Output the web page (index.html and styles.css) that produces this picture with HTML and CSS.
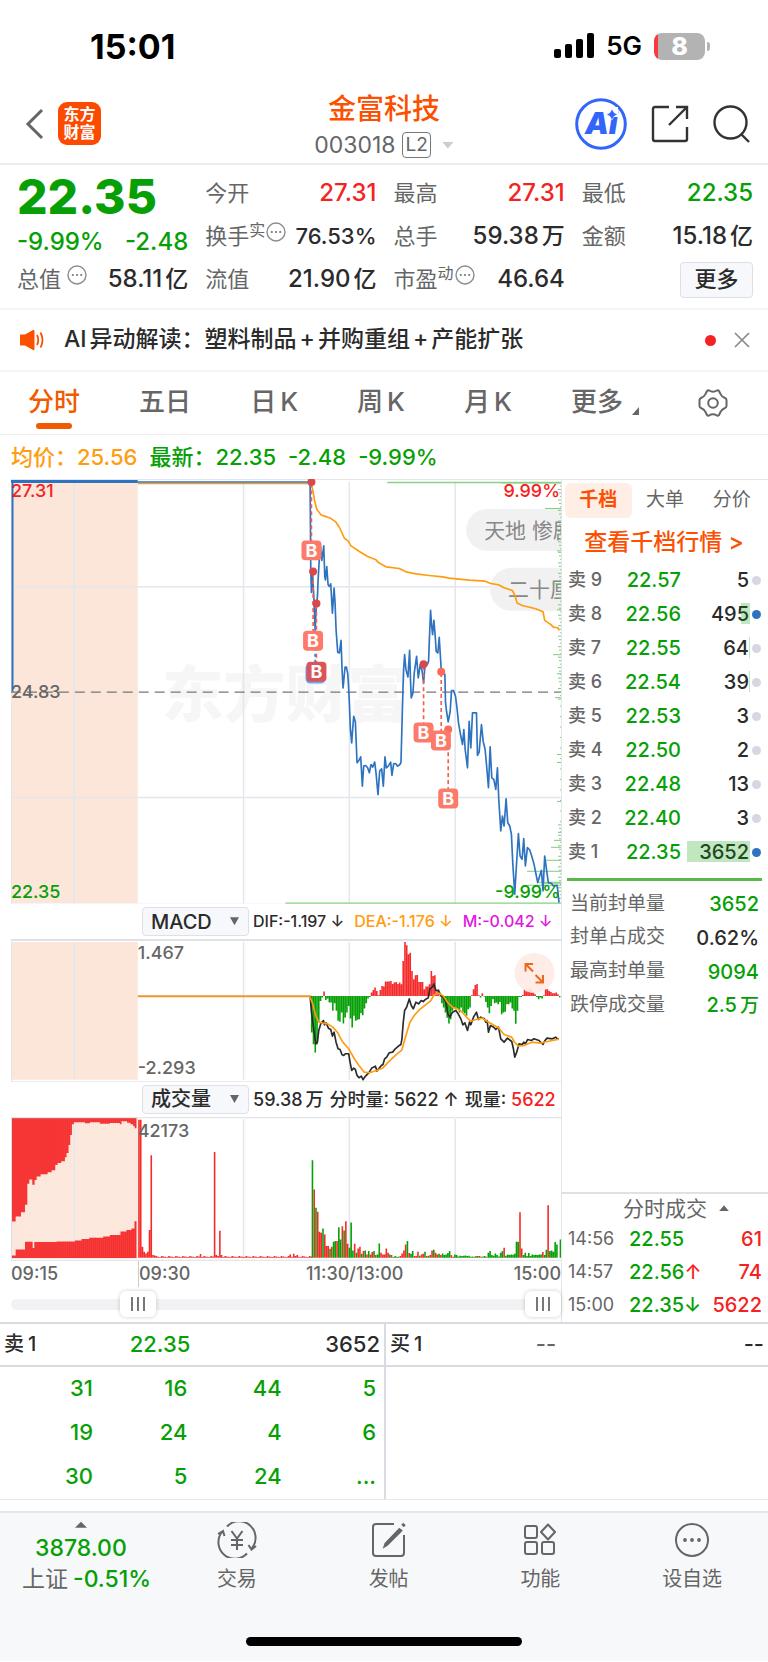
FILE: index.html
```html
<!DOCTYPE html>
<html lang="zh-CN">
<head>
<meta charset="utf-8">
<meta name="viewport" content="width=device-width, initial-scale=1">
<title>金富科技 003018</title>
<link rel="stylesheet" href="styles.css">
</head>
<body>
<svg class="defs" width="0" height="0" aria-hidden="true">
  <symbol id="info" viewBox="0 0 20 20"><circle cx="10" cy="10" r="9" fill="none" stroke="#8c8c8c" stroke-width="1.4"/><circle cx="5.8" cy="10" r="1.1" fill="#777"/><circle cx="10" cy="10" r="1.1" fill="#777"/><circle cx="14.2" cy="10" r="1.1" fill="#777"/></symbol>
</svg>

<div class="status">
  <span class="clock">15:01</span>
  <span class="signals">
    <svg width="40" height="26" viewBox="0 0 40 26" aria-hidden="true"><rect x="0" y="16" width="7" height="9" rx="2"/><rect x="11" y="11" width="7" height="14" rx="2"/><rect x="22" y="6" width="7" height="19" rx="2"/><rect x="33" y="0" width="7" height="25" rx="2"/></svg>
    <span class="net">5G</span>
    <span class="battery"><span class="cell">8</span><span class="tip"></span></span>
  </span>
</div>

<header class="top">
  <div class="side">
    <button class="icon" aria-label="返回"><svg width="20" height="32" viewBox="0 0 20 32" fill="none" stroke="#666" stroke-width="3"><path d="M17 2 L3 16 L17 30"/></svg></button>
    <a class="logo" href="#"><span>东方</span><span>财富</span></a>
  </div>
  <div class="stock">
    <h1>金富科技</h1>
    <div class="code"><span>003018</span><span class="lv">L2</span><i class="caret"></i></div>
  </div>
  <div class="side tools">
    <button class="icon" aria-label="Ai"><svg width="52" height="52" viewBox="0 0 52 52"><circle cx="26" cy="26" r="24.3" fill="none" stroke="#3465fb" stroke-width="3"/><text class="ai" x="10" y="36">Ai</text><rect x="31" y="9" width="12" height="9.5" fill="#fff"/><path d="M37 11 L39 14.6 L42.5 16.5 L39 18.4 L37 22 L35 18.4 L31.5 16.5 L35 14.6Z" fill="#3465fb" stroke="#fff" stroke-width=".6"/></svg></button>
    <button class="icon" aria-label="分享"><svg width="38" height="38" viewBox="0 0 38 38" fill="none" stroke="#333" stroke-width="2.4"><path d="M18 2H4Q2 2 2 4V34Q2 36 4 36H34Q36 36 36 34V22M25 2H36V14M36 2L18 20"/></svg></button>
    <button class="icon" aria-label="搜索"><svg width="38" height="38" viewBox="0 0 38 38" fill="none" stroke="#333" stroke-width="2.4"><circle cx="17.500" cy="17.500" r="16"/><path d="M28 29L36 37"/></svg></button>
  </div>
</header>

<section class="quote">
  <div class="last">22.35</div>
  <div class="kv"><span>今开</span><b class="red">27.31</b></div>
  <div class="kv"><span>最高</span><b class="red">27.31</b></div>
  <div class="kv"><span>最低</span><b class="green">22.35</b></div>
  <div class="kv chg"><b class="green">-9.99%</b><b class="green">-2.48</b></div>
  <div class="kv tight"><span>换手<sup>实</sup><svg class="inf"><use href="#info"/></svg></span><b>76.53%</b></div>
  <div class="kv"><span>总手</span><b>59.38<em>万</em></b></div>
  <div class="kv"><span>金额</span><b>15.18<em>亿</em></b></div>
  <div class="kv"><span>总值<svg class="inf gapl"><use href="#info"/></svg></span><b>58.11<em>亿</em></b></div>
  <div class="kv"><span>流值</span><b>21.90<em>亿</em></b></div>
  <div class="kv"><span>市盈<sup>动</sup><svg class="inf"><use href="#info"/></svg></span><b>46.64</b></div>
  <div class="kv end"><button class="more">更多</button></div>
</section>

<section class="notice">
  <svg width="24" height="22" viewBox="0 0 24 22" aria-hidden="true"><path d="M0 6.500Q0 5.500 1 5.500H5L13 1Q14.500 .5 14.500 2V20Q14.500 21.500 13 21L5 16.500H1Q0 16.500 0 15.500Z" fill="#fc5000"/><path d="M17 6Q19.500 11 17 16M20.500 3.500Q24.500 11 20.500 18.500" fill="none" stroke="#fc5000" stroke-width="1.800"/></svg>
  <p>AI<em>异动解读：塑料制品</em><em>+</em><em>并购重组</em><em>+</em><em>产能扩张</em></p>
  <i class="dot"></i>
  <button class="icon" aria-label="关闭"><svg width="16" height="16" viewBox="0 0 16 16" stroke="#888" stroke-width="1.600"><path d="M1 1L15 15M15 1L1 15"/></svg></button>
</section>

<nav class="tabs">
  <a class="on" href="#">分时</a><a href="#">五日</a><a href="#">日<em>K</em></a><a href="#">周<em>K</em></a><a href="#">月<em>K</em></a><a class="tm" href="#">更多<i></i></a>
  <button class="icon" aria-label="设置"><svg width="30" height="28" viewBox="0 0 30 28" fill="none" stroke="#666" stroke-width="2" stroke-linejoin="round"><path d="M9 2Q10 1 11 1.500Q15 4 19 1.500Q20 1 21 2L22.500 5Q23.500 7.500 27 9Q28.500 9.600 28.500 11V17Q28.500 18.400 27 19Q23.500 20.500 22.500 23L21 26Q20 27 19 26.500Q15 24 11 26.500Q10 27 9 26L7.500 23Q6.500 20.500 3 19Q1.500 18.400 1.500 17V11Q1.500 9.600 3 9Q6.500 7.500 7.500 5Z"/><circle cx="15" cy="14" r="4.800"/></svg></button>
</nav>

<div class="legend"><span class="orange">均价：25.56</span><span class="green">最新：22.35</span><span class="green">-2.48</span><span class="green">-9.99%</span></div>

<main class="board">
  <div class="charts">
    <svg class="plot" viewBox="11 479 551 426" role="img" aria-label="分时走势">
      <rect x="11" y="480" width="127" height="424" fill="#fce6da"/>
      <text class="wm" x="162" y="717">东方财富</text>
      <path class="grid" d="M74.500 482V904M244 482V904M350 482V904M456 482V904M11 587H562M11 798H562"/>
      <path d="M11.500 480V905M11 479.500H562M11 905H562" stroke="#e3e5ea" fill="none"/>
      <rect x="467" y="509" width="120" height="42" rx="21" class="pill"/><rect x="491" y="568" width="100" height="43" rx="21" class="pill"/>
      <text class="cm" x="485" y="538">天地 惨剧</text><text class="cm" x="509" y="597">二十厘</text>
      <path d="M11 692.500H562" stroke="#777" stroke-width="1.300" stroke-dasharray="10 6"/>
      <path id="edge" stroke="#7ccc7c" stroke-width="1" fill="none"/>
      <path d="M286 904H562M388 482.500H562" stroke="#86d286" stroke-width="1.300"/>
      <path d="M138 483.500H312" stroke="#f59a23" stroke-width="1.500"/>
      <path d="M11 481.500H138" stroke="#2e73c0" stroke-width="3"/><path d="M12.500 482V692" stroke="#2e73c0" stroke-width="2"/><path d="M138 482H312" stroke="#2e73c0" stroke-width="1.500"/>
      <g transform="translate(290 470) scale(.33333)" fill="none" stroke-linejoin="round">
        <polyline stroke="#ff9c10" stroke-width="5" points="64,40 70,60 75,90 82,118 95,135 110,140 125,146 138,155 150,172 165,205 176,213 185,228 210,245 235,260 260,270 268,279 290,291 330,296 350,306 380,312 420,317 460,321 480,325 540,331 588,334 605,341 628,345 645,354 670,362 678,378 684,400 700,407 740,417 762,426 767,452 785,464 793,472 806,474 810,482"/>
        <polyline stroke="#2e73c0" stroke-width="5" points="60,36 62,50 64,300 66,368 69,310 71,340 74,400 77,480 80,420 84,380 86,330 90,260 92,218 97,272 103,228 106,320 108,330 112,290 116,345 120,350 124,342 129,430 134,355 137,400 140,480 145,548 150,550 155,512 158,600 161,655 167,592 171,592 175,612 177,640 180,700 183,780 187,820 189,790 193,740 198,757 203,880 209,872 214,862 219,950 223,890 229,888 235,895 240,910 245,885 250,893 256,878 260,910 266,976 271,905 277,898 282,950 287,862 291,895 297,890 304,878 308,918 313,883 319,882 325,890 331,886 335,880 338,770 341,660 343,600 346,555 350,600 356,622 361,542 364,640 366,685 371,670 375,610 382,560 387,625 393,585 398,600 403,640 408,580 414,585 418,575 420,520 424,422 427,465 430,495 434,452 438,500 441,545 446,550 450,503 453,550 456,600 462,605 467,615 469,700 472,725 477,757 483,725 487,663 493,663 499,680 504,720 508,760 514,795 520,825 524,780 528,840 535,895 540,755 545,835 550,730 562,730 565,858 570,848 577,765 582,815 588,840 593,895 598,955 603,832 608,925 614,930 620,960 625,895 629,990 635,1085 640,1040 645,1070 651,988 656,1060 662,1070 667,1095 671,1180 677,1275 682,1190 688,1093 693,1160 699,1170 704,1108 709,1190 715,1135 722,1142 728,1160 735,1185 741,1215 746,1240 752,1220 757,1203 762,1265 767,1160 773,1205 778,1240 787,1242 793,1250 804,1248 806,1260 810,1300"/>
        <path stroke="#f4604f" stroke-width="5" stroke-dasharray="12 9" d="M66 40V215M71 310V485M81 405V580M403 590V762M456 610V785M477 785V958"/>
        <path stroke="#3a80d8" stroke-width="5" stroke-dasharray="9 9" d="M77 480V580"/>
      </g>
      <g id="marks"></g>
      <text class="lab red" x="11" y="497">27.31</text><text class="lab gray" x="11" y="698">24.83</text><text class="lab green" x="11" y="899">22.35</text>
      <text class="lab red" x="561" y="497" text-anchor="end">9.99%</text><text class="lab green" x="561" y="899" text-anchor="end">-9.99%</text>
    </svg>

    <div class="bar">
      <label class="pick"><select aria-label="指标"><option>MACD</option></select></label>
      <span class="ind">DIF:-1.197 ↓</span><span class="ind orange">DEA:-1.176 ↓</span><span class="ind pink">M:-0.042 ↓</span>
    </div>
    <svg class="plot" viewBox="11 940 551 143" role="img" aria-label="MACD">
      <rect x="11" y="943" width="127" height="138" fill="#fce6da"/>
      <path class="grid" d="M74.500 943V1081M244 943V1081M350 943V1081M456 943V1081"/>
      <path d="M11 941H562" stroke="#dfe1e6" stroke-width="2"/><path d="M11 1083H562M11.500 941V1083" stroke="#e3e5ea"/>
      <path id="mr" stroke="#f52a2a" stroke-width="1.600"/><path id="mg" stroke="#06a006" stroke-width="1.600"/>
      <path d="M138 997.300H311" stroke="#f0942a" stroke-width="2"/>
      <g transform="translate(290 900) scale(.33333)" fill="none" stroke-linejoin="round">
        <polyline stroke="#2b2b2b" stroke-width="5" points="62,291 66,340 72,385 79,435 84,430 88,395 94,375 102,365 105,378 110,372 117,388 124,392 129,412 134,400 140,430 146,450 152,452 158,468 163,470 168,465 178,465 182,490 187,515 193,508 198,512 203,530 209,537 216,532 221,543 226,535 240,520 247,508 254,505 258,502 263,517 270,508 276,500 281,497 286,480 292,475 300,462 310,460 318,450 330,440 335,437 338,420 342,370 346,335 352,325 360,300 366,320 372,330 380,310 388,315 396,305 402,308 408,302 417,297 422,270 430,264 434,255 440,275 448,275 455,290 462,295 470,310 476,345 482,355 490,340 500,335 507,345 515,360 521,378 527,372 535,395 541,370 545,378 553,355 562,340 568,362 575,355 586,360 590,370 594,365 598,400 604,380 614,385 620,392 628,385 635,420 645,430 655,418 668,428 673,450 677,475 683,460 690,435 700,437 704,430 709,435 716,422 727,425 735,420 750,425 762,437 768,425 774,418 790,420 800,415 805,420 810,420"/>
        <polyline stroke="#ff9c10" stroke-width="5" points="60,291 70,315 78,348 88,370 100,373 115,375 130,385 145,402 160,430 178,450 195,480 210,502 224,520 240,522 262,515 280,508 300,487 320,468 338,453 350,410 362,370 375,350 390,333 410,317 425,305 434,288 450,283 462,291 475,310 490,325 505,330 520,340 535,358 545,367 560,362 580,358 595,368 612,378 628,387 645,407 668,415 676,430 688,442 705,440 728,430 755,433 775,428 810,421"/>
      </g>
      <circle cx="535.500" cy="974" r="20" fill="#fdebe3" fill-opacity=".9"/>
      <path d="M534 965H526.500V972.500M526.500 965L534 972.500M544 976V983.500H536.500M544 983.500L536.500 976" fill="none" stroke="#f0641e" stroke-width="2"/>
      <text class="lab gray" x="138" y="960">1.467</text><text class="lab gray" x="138" y="1075">-2.293</text>
    </svg>

    <div class="bar">
      <label class="pick"><select aria-label="副图"><option>成交量</option></select></label>
      <span class="vol">59.38<em>万</em></span><span class="vol">分时量: 5622 ↑</span><span class="vol">现量: <b class="red">5622</b></span>
    </div>
    <svg class="plot" viewBox="11 1118 551 144" role="img" aria-label="成交量">
      <rect x="11" y="1119" width="127" height="141" fill="#fce6da"/>
      <path class="grid" d="M74.500 1120V1260M244 1120V1260M350 1120V1260M456 1120V1260"/>
      <g transform="translate(0 900) scale(.33333)"><path fill="#f62626" d="M35 657V968H47V953H63V940H75V918H82V855H88V842H97V858H104V843H110V833H122V826H143V820H155V814H166V798H173V792H184V787H195V775H200V762H206V738H211V708H216V676H222V670H255V673H270V670H300V674H330V672H360V676H365V667H382V671H392V676H400V682H405V688H410V657ZM35 1078V1070H47V1052H75V1029H98V1048H103V1030H170V1028H225V1025H245V1021H268V1017H310V1013H330V1009H362V998H380V994H395V989H404V967H410V1078Z"/></g>
      <path id="ties" stroke="#fff" stroke-opacity=".22" stroke-width=".7"/>
      <path d="M11 1118.700H562M11 1261.500H562M11.500 1118V1261" stroke="#dcdee3"/>
      <path id="vr" stroke="#f52a2a" stroke-width="1.600"/><path id="vg" stroke="#06a006" stroke-width="1.600"/>
      <text class="lab gray" x="138" y="1138">42173</text>
    </svg>
    <div class="axis"><span>09:15</span><span class="t2">09:30</span><span class="t3">11:30/13:00</span><span class="t4">15:00</span></div>
    <div class="range"><input type="range" min="0" max="1000" value="212" aria-label="起始"><input type="range" min="0" max="1000" value="1000" aria-label="结束"></div>
  </div>

  <aside class="depth">
    <div class="dtabs"><button class="on">千档</button><button>大单</button><button>分价</button></div>
    <a class="all" href="#">查看千档行情 &gt;</a>
    <table class="book"><tbody>
      <tr><th>卖 9</th><td class="green">22.57</td><td>5</td><td><i></i></td></tr>
      <tr><th>卖 8</th><td class="green">22.56</td><td>495<s style="width:9px"></s></td><td><i class="bl"></i></td></tr>
      <tr><th>卖 7</th><td class="green">22.55</td><td>64<s style="width:1px"></s></td><td><i></i></td></tr>
      <tr><th>卖 6</th><td class="green">22.54</td><td>39<s style="width:1px"></s></td><td><i></i></td></tr>
      <tr><th>卖 5</th><td class="green">22.53</td><td>3</td><td><i></i></td></tr>
      <tr><th>卖 4</th><td class="green">22.50</td><td>2</td><td><i></i></td></tr>
      <tr><th>卖 3</th><td class="green">22.48</td><td>13</td><td><i></i></td></tr>
      <tr><th>卖 2</th><td class="green">22.40</td><td>3</td><td><i></i></td></tr>
      <tr><th>卖 1</th><td class="green">22.35</td><td>3652<s style="width:63px"></s></td><td><i class="bl"></i></td></tr>
    </tbody></table>
    <table class="stats"><tbody>
      <tr><th>当前封单量</th><td class="green">3652</td></tr>
      <tr><th>封单占成交</th><td>0.62%</td></tr>
      <tr><th>最高封单量</th><td class="green">9094</td></tr>
      <tr><th>跌停成交量</th><td class="green">2.5<em>万</em></td></tr>
    </tbody></table>
    <div class="deals">
      <button class="dt">分时成交 <i></i></button>
      <table><tbody>
        <tr><th>14:56</th><td class="green">22.55</td><td class="red">61</td></tr>
        <tr><th>14:57</th><td class="green">22.56<span class="red">↑</span></td><td class="red">74</td></tr>
        <tr><th>15:00</th><td class="green">22.35<span>↓</span></td><td class="red">5622</td></tr>
      </tbody></table>
    </div>
  </aside>
</main>

<section class="queue">
  <div class="half">
    <div class="qh"><span>卖<em>1</em></span><span class="green">22.35</span><span>3652</span></div>
    <table><tbody>
      <tr><td>31</td><td>16</td><td>44</td><td>5</td></tr>
      <tr><td>19</td><td>24</td><td>4</td><td>6</td></tr>
      <tr><td>30</td><td>5</td><td>24</td><td>...</td></tr>
    </tbody></table>
  </div>
  <div class="half">
    <div class="qh"><span>买<em>1</em></span><span class="gray">--</span><span>--</span></div>
  </div>
</section>

<footer class="foot">
  <nav class="dock">
    <a class="index" href="#"><i></i><b>3878.00</b><span>上证<b>-0.51%</b></span></a>
    <a href="#"><svg width="40" height="36" viewBox="0 0 40 36" fill="none" stroke="#666" stroke-width="2"><path d="M10 4.500A16.500 16.500 0 0 1 35 26M30 31.500A16.500 16.500 0 0 1 5 10M1 12L6 9L7.500 14M39 24L34.500 27.500L31.500 23"/><path d="M14.500 9L20 16.500L25.500 9M20 16.500V28M14 18H26M14 23H26"/></svg><span>交易</span></a>
    <a href="#"><svg width="36" height="36" viewBox="0 0 36 36" fill="none" stroke="#666" stroke-width="2"><path d="M23 2H5Q2 2 2 5V31Q2 34 5 34H30Q33 34 33 31V13"/><path d="M29 6.500L14.500 21.500L13.500 24.500L16 23L31 8" fill="#666"/><path d="M31.500 4L33.500 2" stroke-width="3.500"/></svg><span>发帖</span></a>
    <a href="#"><svg width="34" height="36" viewBox="0 0 34 36" fill="none" stroke="#666" stroke-width="2"><rect x="2" y="4" width="12" height="12" rx="2"/><rect x="2" y="20" width="12" height="12" rx="2"/><rect x="19" y="20" width="12" height="12" rx="2"/><path d="M25 2.500L32 10L25 17.500L18 10Z" stroke-linejoin="round"/></svg><span>功能</span></a>
    <a href="#"><svg width="36" height="36" viewBox="0 0 36 36" fill="none" stroke="#666" stroke-width="2"><circle cx="18" cy="18" r="16"/><g fill="#666" stroke="none"><circle cx="11" cy="18" r="1.900"/><circle cx="18" cy="18" r="1.900"/><circle cx="25" cy="18" r="1.900"/></g></svg><span>设自选</span></a>
  </nav>
  <div class="home"></div>
</footer>
<script src="charts.js"></script>
</body>
</html>
```
FILE: styles.css
```css
* { box-sizing: border-box; }
body { margin: 0; background: #fff; color: #2b2b2b; font: 500 22px/1.2 Inter, "Noto Sans CJK SC", sans-serif; }
h1, p { margin: 0; }
em, i { font-style: normal; }
b, th { font-weight: 500; }
a { color: inherit; text-decoration: none; }
button { border: 0; padding: 0; background: none; font: inherit; color: inherit; }
svg { display: block; }
table { border-collapse: collapse; table-layout: fixed; width: 100%; }
td, th { padding: 0; text-align: right; }
th { text-align: left; }
.defs { position: absolute; }
.red { color: #f52222; fill: #f52222; }
.green { color: #06a006; fill: #06a006; }
.gray { color: #666; fill: #666; }
.orange { color: #ff9c10; }
.pink { color: #e018e0; }
.icon { display: flex; flex: none; }

.status { height: 92px; display: flex; justify-content: space-between; align-items: center; padding: 0 58px 0 90px; }
.clock { font-size: 34px; font-weight: 700; color: #000; padding-top: 2px; }
.signals { display: flex; align-items: center; gap: 12px; color: #000; }
.net { font-size: 26px; font-weight: 600; }
.battery { display: flex; align-items: center; gap: 2px; }
.cell { width: 51px; height: 27px; border-radius: 8px; background: linear-gradient(90deg, #f9393a 4px, #b3b3b3 4px); color: #fff; font-size: 25px; font-weight: 800; line-height: 27px; text-align: center; }
.tip { width: 3px; height: 9px; border-radius: 0 4px 4px 0; background: #b3b3b3; }

.top { height: 73px; display: flex; justify-content: space-between; align-items: center; padding: 0 17px 8px 25px; border-bottom: 2px solid #ececec; }
.side { display: flex; align-items: center; gap: 13px; width: 252px; }
.logo { width: 43px; height: 43px; border-radius: 9px; background: #fc4a00; color: #fff; display: flex; flex-direction: column; align-items: center; justify-content: center; font-size: 16px; line-height: 18px; font-weight: 700; padding-bottom: 2px; }
.stock { display: flex; flex-direction: column; align-items: center; gap: 5px; padding-top: 2px; }
.stock h1 { font-size: 28px; line-height: 36px; font-weight: 500; color: #fc5000; }
.code { display: flex; align-items: center; gap: 7px; color: #666; font-size: 23px; line-height: 26px; font-weight: 400; }
.lv { border: 1px solid #777; border-radius: 4px; font-size: 19px; line-height: 24px; padding: 0 2px; }
.caret { width: 12px; height: 7px; background: #ccc; clip-path: polygon(0 0, 100% 0, 50% 100%); margin-left: 4px; }
.tools { justify-content: flex-end; gap: 24px; width: 260px; }
.ai { font: italic 900 30px Inter, sans-serif; fill: #3465fb; }

.quote { display: grid; grid-template-columns: repeat(4, 1fr); column-gap: 17px; grid-auto-rows: 43px; padding: 7px 15px 7px 17px; border-bottom: 2px solid #f5f5f5; }
.last { font-size: 48px; line-height: 50px; font-weight: 800; color: #06a006; }
.kv { display: flex; justify-content: space-between; align-items: center; white-space: nowrap; font-size: 24px; }
.kv > span { font-size: 22px; color: #666; font-weight: 400; display: flex; align-items: center; }
.kv em { margin-left: 3px; font-size: 23px; }
.kv.chg { padding-top: 12px; }
.kv.tight { font-size: 22px; }
.kv sup { font-size: 16px; line-height: 16px; padding-bottom: 14px; }
.inf { width: 20px; height: 20px; margin: 0 0 10px 1px; }
.inf.gapl { margin-left: 6px; }
.kv.end { justify-content: flex-end; }
.more { width: 73px; height: 36px; border: 1px solid #dfe0e6; border-radius: 4px; background: #f7f8fb; font-size: 22px; }

.notice { height: 62px; display: flex; align-items: center; padding: 0 18px 0 20px; border-bottom: 2px solid #f5f5f5; }
.notice p { flex: 1; padding-left: 20px; font-size: 23px; white-space: nowrap; }
.notice em { margin-left: 3px; }
.dot { width: 11px; height: 11px; border-radius: 50%; background: #f52222; margin-right: 18px; }

.tabs { height: 63px; display: flex; justify-content: space-between; align-items: center; padding: 0 40px 0 28px; border-bottom: 1px solid #eee; font-size: 26px; color: #666; }
.tabs a { height: 62px; line-height: 60px; display: flex; position: relative; }
.tabs em { margin-left: 4px; }
.tabs .on { color: #f05a00; }
.tabs .on::after { content: ""; position: absolute; left: 8px; right: 8px; bottom: 5px; height: 6px; border-radius: 3px; background: #f05a00; }
.tm i { width: 7px; height: 8px; background: #666; clip-path: polygon(100% 0, 100% 100%, 0 100%); align-self: flex-end; margin: 0 0 19px 9px; }

.legend { height: 44px; display: flex; align-items: center; gap: 12px; padding-left: 11px; font-size: 22px; }

.board { display: grid; grid-template-columns: minmax(0, 1fr) 206px; border-bottom: 2px solid #d9dbe2; }
.charts { padding-left: 11px; border-right: 1px solid #e3e5ea; }
.plot { width: 100%; height: auto; }
.grid { stroke: #e4e6ee; stroke-width: 1.5; fill: none; }
.lab { font-size: 18px; }
.wm { font-size: 62px; font-weight: 900; fill: #f6f6f6; }
.pill { fill: #f1f1f1; }
.cm { font-size: 21px; font-weight: 400; fill: #888; }
.bmark { font-size: 18px; font-weight: 700; fill: #fff; }
.bar { height: 35px; display: flex; align-items: center; padding-left: 131px; gap: 10px; white-space: nowrap; }
.pick { position: relative; flex: none; margin-right: -6px; }
.pick select { appearance: none; width: 107px; height: 29px; border: 1px solid #dfe0e6; border-radius: 4px; background: #f7f8fb; font: 500 20px/26px Inter, "Noto Sans CJK SC", sans-serif; color: #2b2b2b; padding: 0 0 0 8px; }
.pick::after { content: ""; position: absolute; right: 10px; top: 10px; width: 9px; height: 8px; background: #666; clip-path: polygon(0 0, 100% 0, 50% 100%); }
.ind { font-size: 16px; }
.vol { font-size: 18px; }
.vol + .vol { margin-left: -4px; }
.vol em { margin-left: 3px; }
.axis { display: grid; grid-template-columns: 127px 157px 140px 1fr; height: 26px; font-size: 18px; line-height: 26px; color: #666; }
.t2 { border-left: 1px solid #ccc; }
.t3 { padding-left: 11px; white-space: nowrap; }
.t4 { text-align: right; }
.range { position: relative; height: 35px; }
.range::before { content: ""; position: absolute; inset: 12px 0 12px; border-radius: 6px; background: #f2f2f4; }
.range input { position: absolute; left: 0; top: 4px; width: 100%; height: 26px; margin: 0; appearance: none; background: none; pointer-events: none; }
.range input::-webkit-slider-thumb { appearance: none; pointer-events: auto; width: 36px; height: 26px; border-radius: 6px; box-shadow: 0 0 4px #0003; background: linear-gradient(90deg, #777 2px, #fff 2px 6px, #777 6px 8px, #fff 8px 12px, #777 12px 14px) center / 14px 14px no-repeat, #fff; }

.depth { display: flex; flex-direction: column; border-top: 1px solid #e3e5ea; }
.dtabs { display: flex; padding: 3px; font-size: 19px; color: #666; }
.dtabs button { flex: 1; height: 35px; border-radius: 6px; font-weight: 400; }
.dtabs .on { background: #feeee6; color: #fc5000; font-weight: 700; }
.all { color: #fc5000; font-size: 23px; line-height: 42px; text-align: center; padding-right: 2px; white-space: nowrap; }
.book { font-size: 20px; }
.book tr { height: 34px; }
.book th { width: 50px; padding-left: 6px; color: #666; font-size: 18px; white-space: nowrap; }
.book td:nth-child(2) { width: 69px; }
.book td:nth-child(3) { width: 68px; position: relative; }
.book td:nth-child(4) { padding-right: 7px; }
.book i { display: inline-block; width: 9px; height: 9px; border-radius: 50%; background: #d5d8e0; vertical-align: 2px; }
.book .bl { background: #2e73c0; }
.book s { position: absolute; right: -1px; top: 6px; height: 21px; background: #06a00640; }
.stats { margin: 9px 0 0 5px; border-top: 3px solid #57b947; font-size: 20px; width: 195px; }
.stats tr { height: 34px; }
.stats tr:first-child { height: 41px; }
.stats tr:first-child > * { padding-top: 7px; }
.stats th { width: 110px; color: #666; font-size: 19px; font-weight: 400; padding-left: 3px; white-space: nowrap; }
.stats td { padding-right: 3px; }
.stats em { margin-left: 3px; font-size: 19px; }
.deals { margin-top: auto; border-top: 2px solid #dfe1e6; padding: 0 6px 0 6px; font-size: 20px; }
.dt { display: flex; width: 100%; height: 29px; align-items: center; justify-content: center; gap: 12px; padding-left: 22px; font-size: 21px; font-weight: 400; color: #666; }
.dt i { width: 10px; height: 6px; background: #666; clip-path: polygon(50% 0, 100% 100%, 0 100%); }
.deals tr { height: 33px; }
.deals th { width: 61px; font-size: 18px; font-weight: 400; color: #666; }
.deals td:nth-child(2) { text-align: left; width: 80px; }

.queue { display: grid; grid-template-columns: 1fr 1fr; border-bottom: 1px solid #e6e8ec; }
.half + .half { border-left: 2px solid #d9dbe2; }
.qh { display: grid; grid-template-columns: 76px 160px 1fr; height: 43px; align-items: center; padding: 0 4px; border-bottom: 2px solid #d9dbe2; font-size: 22px; }
.qh em { margin-left: 4px; }
.qh span:first-child { font-size: 20px; }
.qh span:nth-child(2) { text-align: center; }
.qh span:nth-child(3) { text-align: right; }
.half table { color: #06a006; font-size: 22px; }
.half tr { height: 44px; }
.half td { padding-right: 8px; }
.half td:first-child { width: 101px; }

.foot { margin-top: 11px; height: 150px; border-top: 2px solid #e4e6ea; background: #f7f8fa; display: flex; flex-direction: column; justify-content: space-between; align-items: center; padding-bottom: 15px; }
.dock { width: 100%; display: grid; grid-template-columns: 161px repeat(4, 1fr); color: #666; font-size: 20px; font-weight: 400; padding-top: 9px; }
.dock a { display: flex; flex-direction: column; align-items: center; gap: 9px; line-height: 24px; }
.dock .index { gap: 5px; font-size: 23px; padding-left: 20px; line-height: 26px; }
.index { margin-right: -1px; }
.dock .index { padding-left: 22px; align-items: flex-start; }
.index i { width: 12px; height: 6px; background: #666; clip-path: polygon(50% 0, 100% 100%, 0 100%); margin: 0 0 2px 53px; }
.index > b { padding-left: 13px; }
.index b { color: #06a006; }
.index span { white-space: nowrap; }
.index span b { margin-left: 5px; }
.home { width: 36%; height: 9px; border-radius: 5px; background: #000; }
```
FILE: charts.js
```js
const el = id => document.getElementById(id);
const third = v => (v / 3).toFixed(2);

// MACD histogram, one value per minute, positive values hang below zero
const macd = [110,145,170,145,78,15,5,-13,12,8,20,20,45,22,45,75,78,50,83,65,50,30,68,95,60,75,72,70,52,58,38,22,8,3,-10,-18,-25,-15,-2,-18,-30,-28,-43,-43,-43,-45,-36,-40,-42,-36,-40,-35,-105,-162,-152,-125,-130,-75,-50,-62,-63,-42,-42,-42,-20,-28,-28,-35,-75,-60,-62,-10,-20,2,22,35,50,66,83,70,45,35,38,40,50,35,48,52,60,40,35,-2,-20,-33,-36,-2,5,-8,2,18,35,52,30,10,22,20,25,18,55,50,48,25,25,20,38,45,84,45,3,3,-3,-20,-14,-18,-23,-17,-12,-5,3,10,5,8,-2,-20,-20,-15,-12,-8,-8,-10,-5,4];
let up = '', down = '';
macd.forEach((v, i) => {
  const d = `M${(312.3 + i * 1.762).toFixed(2)} 997v${third(v)}`;
  if (v < 0) up += d; else down += d;
});
el('mr').setAttribute('d', up);
el('mg').setAttribute('d', down);

// Volume: positive = falling minute, negative = rising minute
const vol = [293,-205,150,-138,-78,-75,88,-70,-35,-35,27,-33,48,50,-50,92,55,-95,82,-110,-42,30,106,22,-42,15,-28,-33,12,-20,22,-10,20,-10,-17,20,-8,10,43,-15,-10,-10,-28,-15,10,-8,2,5,3,3,-5,-13,-22,-40,50,-14,12,20,-5,-5,-18,6,-10,-12,18,-5,6,-8,-22,24,-15,-10,12,-8,13,8,10,14,20,-8,-3,10,8,4,6,5,6,7,5,6,3,4,-3,5,-5,5,-3,4,5,-3,15,20,8,6,13,8,4,15,20,-30,6,10,8,10,9,12,48,48,-137,-28,8,15,5,14,5,10,8,9,8,10,10,-17,8,24,-158,20,22,18,47,40,0,55];
up = ''; down = '';
vol.forEach((v, i) => {
  const d = `M${(313 + i * 1.762).toFixed(2)} 1259v${third(-Math.abs(v))}`;
  if (v < 0) up += d; else down += d;
});
const early = {0: 415, 1: 415, 2: 33, 3: 18, 4: 13, 5: 18, 6: 83, 7: 308, 8: 8, 9: 7, 10: 5, 35: 11, 43: 318, 44: 8, 46: 81, 47: 8, 86: 10, 88: 12, 90: 8};
for (let i = 0; i < 99; i++) {
  up += `M${(139.2 + i * 1.762).toFixed(2)} 1259v-${third(early[i] || 2 + (i * 7) % 4)}`;
}
el('vr').setAttribute('d', up);
el('vg').setAttribute('d', down);

let ties = '';
for (let x = 13; x < 137; x += 2) ties += `M${x} 1119V1259`;
el('ties').setAttribute('d', ties);

// Price distribution at the right edge: [y, left x]
const edge = [[483,502],[508.5,546],[551,558],[584,553],[610,558],[655,554],[674,558],[698,556],[755,558],[763,558],[802,558],[833,559],[841,555],[848,552],[861,547],[872,528],[883,538],[884,545],[886,528]];
let ed = '';
for (const [y, x] of edge) ed += `M${x} ${y}H562`;
for (let y = 486, k = 0; y < 900; y += 3.5, k++) {
  if (y > 700 && y < 825 && k % 3) continue;
  ed += `M${562 - 1 - (k * 5) % 3} ${y}H562`;
}
el('edge').setAttribute('d', ed);

let m = '';
for (const [x, y] of [[312,482],[313.6,571.7],[317,603.7],[424.3,664.7],[442,672],[449,730]])
  m += `<circle cx="${x}" cy="${y}" r="4" fill="${x > 440 ? '#fb6a5a' : '#d9484a'}"/>`;
m += '<rect x="306" y="664" width="20" height="20" rx="5" fill="#6ba6f0"/>';
for (const [x, y] of [[312,550.5],[313.6,641],[317,672],[424.3,733],[441.7,741],[449,799]])
  m += `<rect x="${x - 10}" y="${y - 10}" width="20" height="20" rx="4" fill="${y === 672 ? '#d9555a' : '#fd7a6a'}"/><text class="bmark" text-anchor="middle" x="${x}" y="${y + 6.5}">B</text>`;
el('marks').innerHTML = m;
```
